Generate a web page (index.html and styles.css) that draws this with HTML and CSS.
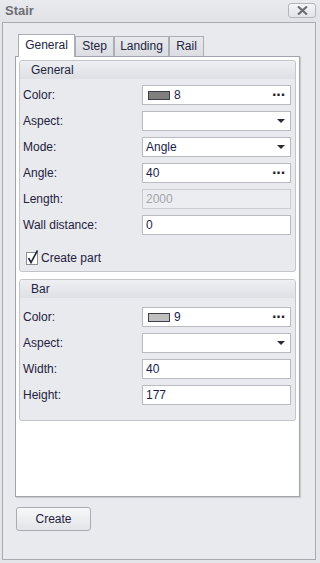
FILE: index.html
```html
<!DOCTYPE html>
<html lang="en">
<head>
  <meta charset="UTF-8" />
  <title>Stair</title>
  <link rel="stylesheet" href="styles.css">
</head>
<body>
  <div class="window">
    <div class="titlebar">
      <span class="title">Stair</span>
      <button type="button" class="close-btn">
        <svg width="11" height="9" viewBox="0 0 11 9"><path d="M1 0.5 L10 8.5 M10 0.5 L1 8.5" stroke="#6d6f76" stroke-width="2.2"/></svg>
      </button>
    </div>

    <div class="frame">
      <div class="tabs">
        <div class="tab active tab-general">General</div>
        <div class="tab tab-step">Step</div>
        <div class="tab tab-landing">Landing</div>
        <div class="tab tab-rail">Rail</div>
      </div>

      <div class="tab-page">
        <!-- General group -->
        <div class="group group-general">
          <div class="group-header">General</div>
          <div class="group-body">
            <div class="row">
              <label>Color:</label>
              <div class="field">
                <span class="swatch dark"></span><span class="value">8</span>
                <span class="dots">&middot;&middot;&middot;</span>
              </div>
            </div>
            <div class="row">
              <label>Aspect:</label>
              <div class="field"><span class="value"></span><span class="arrow"></span></div>
            </div>
            <div class="row">
              <label>Mode:</label>
              <div class="field"><span class="value">Angle</span><span class="arrow"></span></div>
            </div>
            <div class="row">
              <label>Angle:</label>
              <div class="field"><span class="value">40</span><span class="dots">&middot;&middot;&middot;</span></div>
            </div>
            <div class="row">
              <label>Length:</label>
              <div class="field disabled"><span class="value">2000</span></div>
            </div>
            <div class="row">
              <label>Wall distance:</label>
              <div class="field"><span class="value">0</span></div>
            </div>
            <div class="check-row">
              <svg width="15" height="17" viewBox="0 0 15 17">
                <rect x="0.5" y="3.5" width="11" height="12" fill="#fff" stroke="#8c8e96"/>
                <path d="M2.5 9 L5 13.5 L11.5 1.5" fill="none" stroke="#26283a" stroke-width="1.6"/>
              </svg>
              <span>Create part</span>
            </div>
          </div>
        </div>

        <!-- Bar group -->
        <div class="group group-bar">
          <div class="group-header">Bar</div>
          <div class="group-body">
            <div class="row">
              <label>Color:</label>
              <div class="field">
                <span class="swatch light"></span><span class="value">9</span>
                <span class="dots">&middot;&middot;&middot;</span>
              </div>
            </div>
            <div class="row">
              <label>Aspect:</label>
              <div class="field"><span class="value"></span><span class="arrow"></span></div>
            </div>
            <div class="row">
              <label>Width:</label>
              <div class="field"><span class="value">40</span></div>
            </div>
            <div class="row">
              <label>Height:</label>
              <div class="field"><span class="value">177</span></div>
            </div>
          </div>
        </div>
      </div>

      <button type="button" class="create-btn">Create</button>
    </div>
  </div>
</body>
</html>
```

FILE: styles.css
```css
* {
  box-sizing: border-box;
}

body {
  margin: 0;
  padding: 0;
  background-color: #cbccd1;
  font-family: 'Liberation Sans', Arial, sans-serif;
  font-size: 11px;
  color: #1f2140;
}

.window {
  width: 320px;
  height: 563px;
  background: #e4e5e9;
}

.titlebar {
  height: 22px;
  display: flex;
  align-items: flex-start;
  justify-content: space-between;
  padding: 3px 4px 0 5px;
  background: linear-gradient(#e9eaee, #e1e2e6);
}

.title {
  font-size: 13px;
  font-weight: bold;
  color: #6d6e74;
  line-height: 16px;
}

.close-btn {
  width: 28px;
  height: 15px;
  padding: 0;
  border: 1px solid #b3b5bb;
  border-radius: 3px;
  background: linear-gradient(#f4f5f7, #e2e3e7);
  display: flex;
  align-items: center;
  justify-content: center;
}

.frame {
  width: 314px;
  height: 538px;
  margin-left: 2px;
  border: 1px solid #a9abb1;
  background: #e9eaee;
  padding: 11px 0 0 12px;
}

.tabs {
  display: flex;
  align-items: flex-end;
  height: 22px;
  margin-left: 3px;
}

.tab {
  height: 20px;
  border: 1px solid #acaeb5;
  border-bottom: none;
  background: linear-gradient(#e8e9ed, #dcdde2);
  font-size: 12px;
  line-height: 19px;
  text-align: center;
  color: #222440;
}

.tab.active {
  height: 23px;
  margin-bottom: -1px;
  background: #fff;
  line-height: 21px;
  position: relative;
  z-index: 1;
}

.tab-general { width: 57px; }
.tab-step { width: 39px; }
.tab-landing { width: 55px; }
.tab-rail { width: 35px; }

.tab-page {
  width: 285px;
  height: 441px;
  border: 1px solid #a2a4ab;
  background: #fff;
  padding: 3px;
  box-shadow: 1px 1px 1px rgba(0, 0, 0, 0.12);
}

.group {
  width: 277px;
  border: 1px solid #c3c5cb;
  border-radius: 3px;
  background: #e9eaee;
}

.group-general {
  height: 212px;
}

.group-bar {
  height: 142px;
  margin-top: 7px;
}

.group-header {
  height: 18px;
  padding-left: 11px;
  font-size: 12px;
  line-height: 18px;
  color: #222440;
  background: linear-gradient(#eeeff2, #dfe0e5);
  border-radius: 2px 2px 0 0;
}

.group-body {
  display: flex;
  flex-direction: column;
  gap: 6px;
  padding: 6px 2px 0 2px;
}

.group-bar .group-body {
  padding-top: 9px;
}

.row {
  display: flex;
  align-items: center;
  height: 20px;
}

.row label {
  width: 120px;
  padding-left: 1px;
  font-size: 12px;
}

.field {
  width: 149px;
  height: 20px;
  border: 1px solid #b9bbc1;
  background: #fff;
  display: flex;
  align-items: center;
  padding: 0 4px 0 3px;
  font-size: 12px;
  color: #1b1d4a;
}

.field .value {
  flex: 1;
}

.field.disabled {
  background: #ecedf0;
  border-color: #cbcdd2;
  color: #a3a4aa;
}

.swatch {
  width: 22px;
  height: 9px;
  margin: 0 4px 0 2px;
  border: 1px solid #3c3e48;
}

.swatch.dark {
  background: #808080;
}

.swatch.light {
  background: #c0c0c0;
}

.dots {
  font-size: 16px;
  font-weight: bold;
  letter-spacing: -1px;
  color: #1c1e2c;
  line-height: 10px;
  margin-right: 1px;
}

.arrow {
  width: 0;
  height: 0;
  border-left: 4px solid transparent;
  border-right: 4px solid transparent;
  border-top: 4px solid #2a2c36;
  margin-right: 1px;
}

.check-row {
  display: flex;
  align-items: center;
  margin-top: 8px;
  padding-left: 4px;
  height: 17px;
  font-size: 12px;
}

.create-btn {
  width: 75px;
  height: 24px;
  margin: 10px 0 0 1px;
  border: 1px solid #aaacb3;
  border-radius: 3px;
  background: linear-gradient(#f7f8f9, #e3e4e8);
  font-family: 'Liberation Sans', Arial, sans-serif;
  font-size: 12px;
  color: #1f2140;
  padding: 0;
}
```
